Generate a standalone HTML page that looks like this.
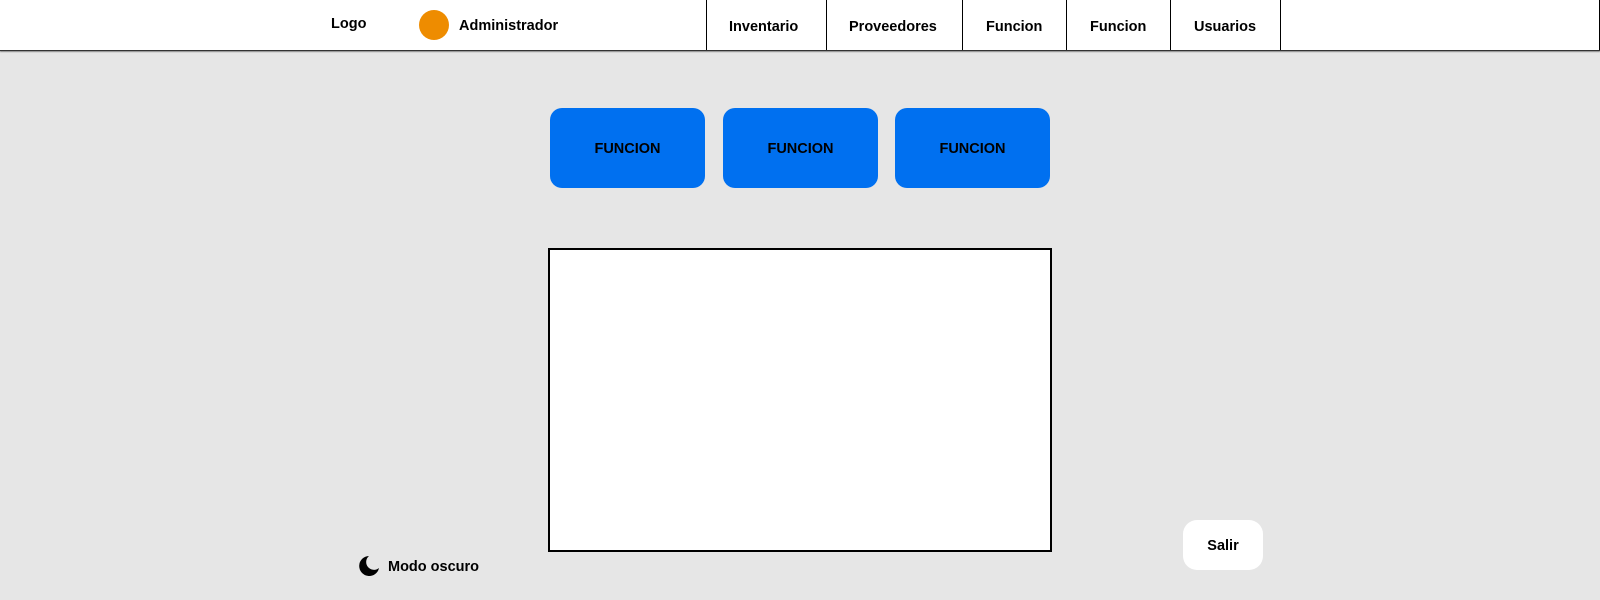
<!DOCTYPE html>
<html><head><meta charset="utf-8"><style>
*{margin:0;padding:0;box-sizing:border-box}
body{width:1600px;height:600px;background:#e6e6e6;font-family:"Liberation Sans",sans-serif;font-weight:bold;color:#000;position:relative;overflow:hidden}
.hdr{position:absolute;left:0;top:0;width:1600px;height:51px;background:#fff;border-bottom:1px solid #333;box-shadow:0 1px 1px #888}
.t{position:absolute;font-size:14.5px;white-space:nowrap}
.sep{position:absolute;top:0;width:1px;height:50px;background:#000}
.btn{position:absolute;top:108px;width:155px;height:80px;background:#0070f0;border-radius:12px;display:flex;align-items:center;justify-content:center;font-size:14.5px;padding-top:2px}
.box{position:absolute;left:548px;top:248px;width:504px;height:304px;background:#fff;border:2px solid #000}
.salir{position:absolute;left:1183px;top:520px;width:80px;height:50px;background:#fff;border-radius:14px;display:flex;align-items:center;justify-content:center;font-size:14.5px;padding-top:2px}
</style></head><body>
<div class="hdr">
<div class="t" style="left:331px;top:16px">Logo</div>
<div style="position:absolute;left:419px;top:10px;width:30px;height:30px;border-radius:50%;background:#ee8c00"></div>
<div class="t" style="left:459px;top:18px">Administrador</div>
<div class="sep" style="left:706px"></div>
<div class="t" style="left:729px;top:19px">Inventario</div>
<div class="sep" style="left:826px"></div>
<div class="t" style="left:849px;top:19px">Proveedores</div>
<div class="sep" style="left:962px"></div>
<div class="t" style="left:986px;top:19px">Funcion</div>
<div class="sep" style="left:1066px"></div>
<div class="t" style="left:1090px;top:19px">Funcion</div>
<div class="sep" style="left:1170px"></div>
<div class="t" style="left:1194px;top:19px">Usuarios</div>
<div class="sep" style="left:1280px"></div>
<div class="sep" style="left:1599px"></div>
</div>
<div class="btn" style="left:550px">FUNCION</div>
<div class="btn" style="left:723px">FUNCION</div>
<div class="btn" style="left:895px">FUNCION</div>
<div class="box"></div>
<svg style="position:absolute;left:358px;top:555px" width="22" height="22" viewBox="0 0 22 22"><path d="M11 1 A10 10 0 1 0 21 13 A7 7 0 0 1 11 1Z" fill="#000"/></svg>
<div class="t" style="left:388px;top:559px">Modo oscuro</div>
<div class="salir">Salir</div>
</body></html>
